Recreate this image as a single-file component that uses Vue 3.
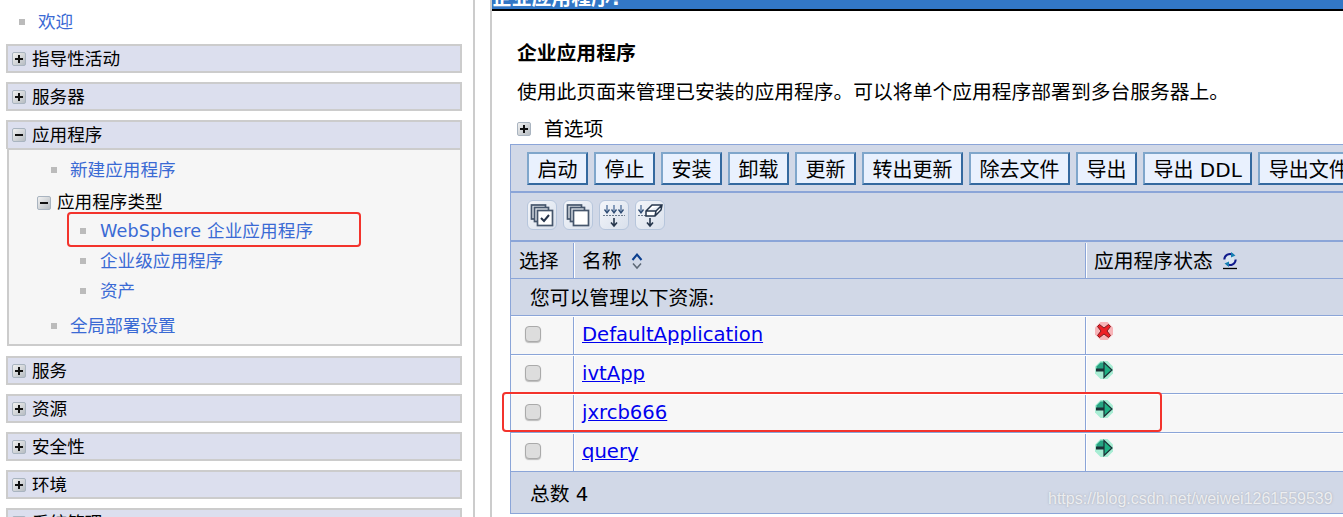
<script setup>
const beforeApps = ['指导性活动', '服务器']
const afterApps = ['服务', '资源', '安全性', '环境', '系统管理']
const actions = ['启动', '停止', '安装', '卸载', '更新', '转出更新', '除去文件', '导出', '导出 DDL', '导出文件']
const apps = [
  { name: 'DefaultApplication', ok: false },
  { name: 'ivtApp', ok: true },
  { name: 'jxrcb666', ok: true },
  { name: 'query', ok: true }
]
</script>

<template>
  <div class="page">
    <aside class="side">
      <div class="welcome"><i class="dot"></i><a class="nav">欢迎</a></div>
      <div v-for="s in beforeApps" :key="s" class="sec"><i class="tog plus"></i><span>{{ s }}</span></div>
      <div class="sec open"><i class="tog"></i><span>应用程序</span></div>
      <div class="panel">
        <div class="it first"><i class="dot"></i><a class="nav">新建应用程序</a></div>
        <div class="type"><i class="tog"></i><span>应用程序类型</span></div>
        <div class="it sub"><i class="dot"></i><a class="nav ws">WebSphere 企业应用程序</a></div>
        <div class="it sub"><i class="dot"></i><a class="nav">企业级应用程序</a></div>
        <div class="it sub"><i class="dot"></i><a class="nav">资产</a></div>
        <div class="it last"><i class="dot"></i><a class="nav">全局部署设置</a></div>
      </div>
      <div v-for="s in afterApps" :key="s" class="sec"><i class="tog plus"></i><span>{{ s }}</span></div>
    </aside>

    <main class="main">
      <div class="bar"><span>企业应用程序?</span></div>
      <h1 class="title">企业应用程序</h1>
      <p class="desc">使用此页面来管理已安装的应用程序。可以将单个应用程序部署到多台服务器上。</p>
      <div class="prefs"><i class="tog plus"></i><span>首选项</span></div>

      <section class="tbl">
        <div class="tools">
          <button v-for="a in actions" :key="a" class="btn"><span>{{ a }}</span></button>
        </div>
        <div class="icons">
          <span class="ib">
            <svg viewBox="0 0 30 30" width="30" height="30"><g fill="#e4e8ef" stroke="#46566c" stroke-width="1.700"><rect x="4.500" y="5" width="14" height="14"/><rect x="7.500" y="7.500" width="14" height="14"/><rect x="10.500" y="10.500" width="15" height="15" fill="#fff"/></g><path d="M14 18l3 3 5-6" fill="none" stroke="#26344a" stroke-width="2"/></svg>
          </span>
          <span class="ib">
            <svg viewBox="0 0 30 30" width="30" height="30"><g fill="#e4e8ef" stroke="#46566c" stroke-width="1.700"><rect x="4.500" y="5" width="14" height="14"/><rect x="7.500" y="7.500" width="14" height="14"/><rect x="10.500" y="10.500" width="15" height="15" fill="#fff"/></g></svg>
          </span>
          <span class="ib">
            <svg viewBox="0 0 30 30" width="30" height="30"><path d="M4 15.500h22" stroke="#6d7b8e" stroke-dasharray="2 1"/><path d="M8 5v7M15 5v7M22 5v7" stroke="#4f6f9a" stroke-width="1.300"/><path d="M5.500 9.500l2.500 3.500 2.500-3.500M12.500 9.500l2.500 3.500 2.500-3.500M19.500 9.500l2.500 3.500 2.500-3.500" fill="none" stroke="#2d4a72" stroke-width="1.300"/><path d="M15 18v8M12 22.500l3 3.500 3-3.500" fill="none" stroke="#26364c" stroke-width="1.600"/></svg>
          </span>
          <span class="ib">
            <svg viewBox="0 0 30 30" width="30" height="30"><path d="M3 15.500h10" stroke="#6d7b8e" stroke-dasharray="2 1"/><path d="M6 5v7" stroke="#4f6f9a" stroke-width="1.300"/><path d="M3.500 9.500l2.500 3.500 2.500-3.500" fill="none" stroke="#2d4a72" stroke-width="1.300"/><path d="M11 11l6-6h10l-1 5-6 6h-9zM11 11h10l6-6M21 11l-1 5" fill="#fff" stroke="#26364c" stroke-width="1.500"/><path d="M15 18v8M12 22.500l3 3.500 3-3.500" fill="none" stroke="#26364c" stroke-width="1.600"/></svg>
          </span>
        </div>
        <div class="row head">
          <div class="c1"><span>选择</span></div>
          <div class="c2"><span>名称</span>
            <svg class="sort" viewBox="0 0 12 18" width="12" height="18"><path d="M1.500 8l4.500-5.500 4.500 5.500" fill="none" stroke="#0b3f8f" stroke-width="2"/><path d="M2 11.500l4 4.500 4-4.500" fill="none" stroke="#5d6875" stroke-width="1.500"/></svg>
          </div>
          <div class="c3"><span>应用程序状态</span>
            <svg class="refresh" viewBox="0 0 16 18" width="16" height="18"><circle cx="8" cy="7.500" r="4" fill="#dbe6f2"/><path d="M2.300 7.500A5.700 5.700 0 0 1 11 2.800M13.700 7.500A5.700 5.700 0 0 1 5 12.200" fill="none" stroke="#101a8c" stroke-width="2"/><path d="M9 0l4.500 3.500L9 5.500zM7 15l-4.500-3.500L7 9.500z" fill="#167fb2"/><path d="M1 16.500h14" stroke="#000" stroke-width="1.300"/></svg>
          </div>
        </div>
        <div class="note"><span>您可以管理以下资源:</span></div>
        <div v-for="a in apps" :key="a.name" class="row data">
          <div class="c1"><input type="checkbox" class="cb" /></div>
          <div class="c2"><a class="link">{{ a.name }}</a></div>
          <div class="c3">
            <svg v-if="a.ok" viewBox="0 0 18 18" width="18" height="18"><path d="M5.500 0h7L18 5.500v7L12.500 18h-7L0 12.500v-7z" fill="#a8edd4"/><path d="M5.500 1.500H9V8H1.500V5.500z" fill="#27a583"/><path d="M9 1.500L17 9l-8 7.500z" fill="#20b184" stroke="#1b3136" stroke-width="1.200"/><path d="M1 7.500h8v3H1z" fill="#1b3136"/></svg>
            <svg v-else viewBox="0 0 18 18" width="18" height="18"><path d="M5.500 0h7L18 5.500v7L12.500 18h-7L0 12.500v-7z" fill="#f8b4b8"/><path d="M4.500 2.500L9 6l4.500-3.500 2 2L12 9l3.500 4.500-2 2L9 12l-4.500 3.500-2-2L6 9 2.500 4.500z" fill="#ee2026" stroke="#7c1c22"/></svg>
          </div>
        </div>
        <div class="foot">总数 4</div>
      </section>
    </main>

    <div class="mark m1"></div>
    <div class="mark m2"></div>
    <div class="wm">https://blog.csdn.net/weiwei1261559539</div>
  </div>
</template>

<style>
html, body { margin: 0; background: #fff; overflow: hidden; }
</style>

<style scoped>
.page {
  position: relative;
  display: flex;
  width: 1343px;
  height: 517px;
  overflow: hidden;
  background: #fff;
  color: #000;
  font-family: "DejaVu Sans", "Noto Sans CJK SC", sans-serif;
}
.side {
  flex: none;
  width: 473px;
  height: 517px;
  border-right: 2px solid #ccc;
  font-size: 17.6px;
}
.welcome { display: flex; align-items: center; height: 44px; padding-left: 19px; }
.welcome .dot { margin-right: 13px; }
.dot { flex: none; display: block; width: 6px; height: 6px; background: #bbb; }
.nav { color: #3a6ad4; white-space: nowrap; margin-bottom: 4px; }
.ws { letter-spacing: 0.1px; }
.sec {
  box-sizing: border-box;
  display: flex;
  align-items: center;
  height: 29px;
  margin: 0 11px 9px 6px;
  padding-left: 4px;
  background: #dcdfee;
  border: 2px solid #ccc;
  white-space: nowrap;
}
.sec span { margin-bottom: 3px; }
.sec .tog { margin-right: 6px; }
.sec.open { margin-bottom: 0; border-bottom-width: 1px; }
.tog {
  position: relative;
  flex: none;
  box-sizing: border-box;
  display: block;
  width: 14px;
  height: 14px;
  border: 1px solid #a9b4c0;
  border-radius: 2px;
  background: linear-gradient(135deg, #f1f1f1, #b6bcc2);
}
.tog::before {
  content: "";
  position: absolute;
  left: 2px;
  top: 5px;
  width: 8px;
  height: 2px;
  background: #111;
}
.tog.plus::after {
  content: "";
  position: absolute;
  left: 5px;
  top: 2px;
  width: 2px;
  height: 8px;
  background: #111;
}
.panel {
  box-sizing: border-box;
  height: 197px;
  margin: 0 11px 10px 7px;
  padding: 1px 0 0;
  background: #f6f6f6;
  border: 2px solid #ccc;
  border-top-width: 1px;
}
.it { display: flex; align-items: center; padding-left: 42px; }
.it .dot { margin-right: 13px; }
.it.first { height: 38px; }
.it.last { height: 40px; }
.it.sub { height: 30px; padding-left: 71px; }
.it.sub .dot { margin-right: 14px; }
.type { display: flex; align-items: center; height: 27px; padding-left: 28px; }
.type .tog { margin-right: 6px; }
.type span { margin-bottom: 4px; }

.main {
  flex: none;
  width: 851px;
  height: 517px;
  margin-left: 15px;
  border-left: 2px solid #ccc;
  font-size: 19.8px;
  overflow: hidden;
}
.bar {
  display: flex;
  align-items: flex-end;
  height: 9px;
  overflow: hidden;
  background: #3277c6;
  border-bottom: 2px solid #000;
  color: #fff;
  font-weight: 700;
  line-height: 24px;
  white-space: nowrap;
}
.bar span { flex: none; margin-bottom: -2px; }
.title {
  margin: 28px 0 0 25px;
  height: 30px;
  font-size: 19.8px;
  line-height: 30px;
  font-weight: 700;
}
.desc { margin: 9px 0 0 25px; height: 30px; line-height: 30px; white-space: nowrap; }
.prefs { display: flex; align-items: center; height: 30px; margin: 6px 0 0 25px; }
.prefs .tog { margin-right: 12px; }
.prefs span { margin-bottom: 3px; margin-left: 1px; }

.tbl {
  width: 900px;
  margin-left: 18px;
  border: 1px solid #8ba5d8;
  border-width: 1px 0 0 1px;
  padding-top: 1px;
  background: #d1d8e7;
}
.tools {
  display: flex;
  gap: 6px;
  box-sizing: border-box;
  height: 47px;
  padding: 6px 0 0 16px;
  border-bottom: 2px solid #8ba5d8;
  white-space: nowrap;
}
.btn {
  flex: none;
  box-sizing: border-box;
  height: 33px;
  margin: 0;
  padding: 3px 8.5px 0;
  background: #e9f1fe;
  border: 2px solid;
  border-color: #7fa6cb #34699f #34699f #7fa6cb;
  border-radius: 0;
  color: #000;
  font: inherit;
  font-size: 20px;
  line-height: 26px;
}
.icons {
  display: flex;
  gap: 6px;
  box-sizing: border-box;
  height: 49px;
  padding: 7px 0 0 16px;
  border-bottom: 2px solid #8ba5d8;
}
.ib {
  display: block;
  width: 30px;
  height: 30px;
  box-sizing: border-box;
  border: 1px solid #b7c6dc;
  border-radius: 6px;
  background: linear-gradient(135deg, #f4f6fa, #d9e0ec);
}
.ib svg { display: block; margin: -1px; }
.row { display: flex; box-sizing: border-box; border-bottom: 1px solid #8ba5d8; }
.row > div { box-sizing: border-box; display: flex; align-items: center; white-space: nowrap; }
.c1 { flex: none; width: 63px; border-right: 1px solid #8ba5d8; }
.c2 { flex: none; width: 512px; border-right: 1px solid #8ba5d8; }
.c3 { flex: 1; }
.head { height: 36px; margin-top: 1px; }
.head span, .note span { margin-bottom: 2px; }
.head .c1 { padding-left: 8px; }
.head .c2 { padding-left: 8px; box-shadow: inset 1px 0 #fff; }
.head .c3 { padding-left: 8px; box-shadow: inset 1px 0 #fff; }
.sort { margin-left: 9px; }
.refresh { margin-left: 9px; }
.note {
  box-sizing: border-box;
  display: flex;
  align-items: center;
  height: 37px;
  padding-left: 19px;
  border-bottom: 1px solid #8ba5d8;
}
.data { height: 39px; background: #f7f7f7; border-top: 1px solid #fff; }
.data .c1 { padding-left: 14px; }
.data .c2 { padding-left: 8px; box-shadow: inset 1px 0 #fff; }
.data .c3 { padding-left: 9px; align-items: flex-start; padding-top: 5px; box-shadow: inset 1px 0 #fff; }
.cb {
  appearance: none;
  display: block;
  box-sizing: border-box;
  width: 16px;
  height: 16px;
  margin: 0 0 4px;
  background: #ddd;
  border: 1px solid #aaa;
  border-radius: 4px;
  box-shadow: 0 1px 1px #bbb;
}
.link { color: #0000ee; text-decoration: underline; font-size: 19.6px; margin-bottom: 2px; }
.foot {
  box-sizing: border-box;
  display: flex;
  align-items: center;
  height: 42px;
  padding-left: 19px;
  border-bottom: 1px solid #8ba5d8;
}
.mark {
  position: absolute;
  box-sizing: border-box;
  border: 2px solid #f3332c;
  border-radius: 4px;
}
.m1 { left: 67px; top: 212px; width: 294px; height: 35px; }
.m2 { left: 502px; top: 392px; width: 660px; height: 40px; }
.wm {
  position: absolute;
  left: 1048px;
  top: 489px;
  font-family: "Liberation Sans", sans-serif;
  font-size: 16px;
  line-height: 20px;
  color: rgba(255, 255, 255, 0.75);
  text-shadow: 0 0 2px rgba(120, 120, 120, 0.5);
  white-space: nowrap;
}
</style>
